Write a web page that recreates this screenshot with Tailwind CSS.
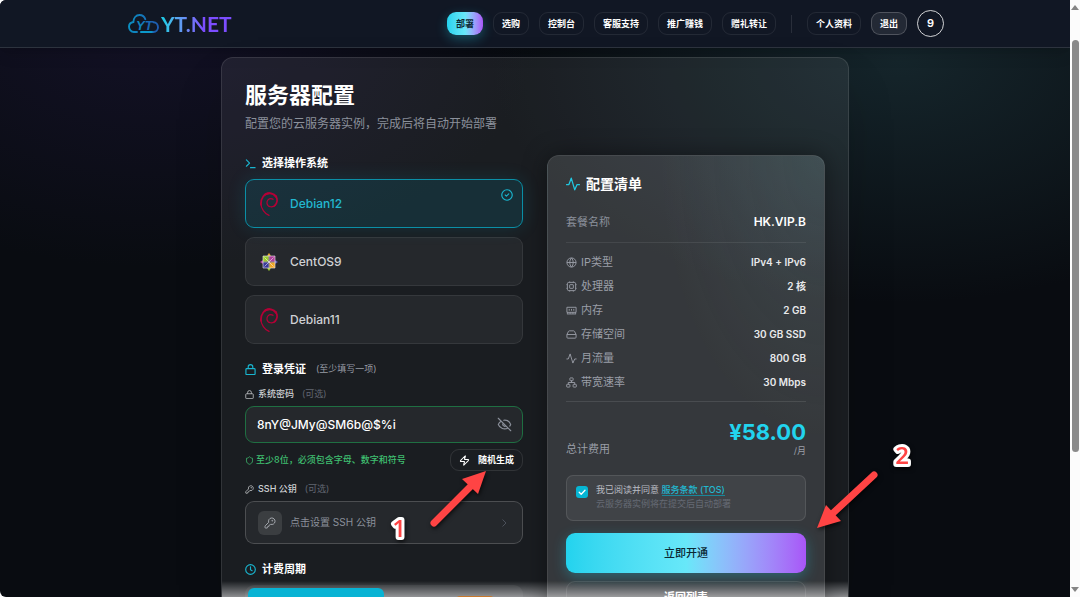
<!DOCTYPE html>
<html lang="zh-CN">
<head>
  <meta charset="UTF-8">
  <meta name="viewport" content="width=device-width, initial-scale=1.0">
  <title>服务器配置 - YT.NET</title>
  <script src="https://cdn.jsdelivr.net/npm/@tailwindcss/browser@4"></script>
</head>
<body class="bg-[#fcfcfc] font-['Inter','Noto_Sans_CJK_SC',sans-serif] text-white">
  <!-- Icons used more than once -->
  <svg class="hidden">
    <symbol id="debian" viewBox="0 0 18 24">
      <g fill="none" stroke="#b40036" stroke-linecap="round">
        <path stroke-width="1.200" d="M9 23.4C4.600 21.500.900 16.500.900 11.200"/>
        <path stroke-width="1.700" d="M1 13C.500 6 4.500 1.300 9.500 1.200"/>
        <path stroke-width="2.200" d="M5.500 2.300C9 .700 13.500 1 16 4.500"/>
        <path stroke-width="1.700" d="M15.500 3.800C18 7 17.500 11.500 14.500 13.800"/>
        <path stroke-width="1.200" d="M15.500 13C12.500 16.200 7.500 15 7 11.300 6.700 8.500 8.700 6.700 10.800 6.700c1 0 1.700.200 2.200.600"/>
      </g>
    </symbol>
    <symbol id="lock" viewBox="0 0 24 24">
      <rect x="2" y="10" width="20" height="13" rx="2"/><path d="M7 10V6.500a5 5 0 0 1 10 0V10"/>
    </symbol>
    <symbol id="key" viewBox="0 0 24 24">
      <path d="M2.600 17.400A2 2 0 0 0 2 18.800V21a1 1 0 0 0 1 1h3a1 1 0 0 0 1-1v-1a1 1 0 0 1 1-1h1a1 1 0 0 0 1-1v-1a1 1 0 0 1 1-1h.200a2 2 0 0 0 1.400-.600l.800-.800a6.500 6.500 0 1 0-4-4z"/><circle cx="16.500" cy="7.500" r=".8"/>
    </symbol>
    <symbol id="pulse" viewBox="0 0 24 24">
      <path d="M1 13h4L9 2l6 20 4-9h4"/>
    </symbol>
  </svg>

  <div class="flex h-screen overflow-hidden">
    <div class="flex min-w-0 flex-1 flex-col overflow-hidden rounded-l-md bg-[#090c11] bg-[radial-gradient(ellipse_at_84%_10%,#15252b_0%,transparent_32%),radial-gradient(ellipse_at_14%_4%,#131126_0%,transparent_30%)]">

      <!-- Header -->
      <header class="h-12 shrink-0 border-b border-white/12 bg-[#111724] shadow-lg">
        <div class="mx-auto flex h-full max-w-[818px] items-center justify-between pl-0.5">
          <a href="#" class="flex items-center gap-0.5">
            <svg class="h-5 w-[31px]" viewBox="0 0 31 20" fill="none" stroke-width="1.900" stroke-linecap="round">
              <defs>
                <linearGradient id="cloud" x1="0" y1="0" x2="1" y2="0">
                  <stop stop-color="#0b8fc2"/><stop offset="1" stop-color="#1e5bb0"/>
                </linearGradient>
              </defs>
              <path stroke="url(#cloud)" d="M9 18H6C3 18 1 15.500 1 12.800 1 10 2.800 8.400 5.400 8 5.500 4 8 1 11.500 1c3 0 5 1.700 5.800 4.200M13 18h12.500c2.500 0 4.500-2 4.500-4.700 0-3-2-5-4.500-5.100"/>
              <text x="8" y="15.500" font-family="Liberation Sans, sans-serif" font-size="13" font-weight="700" font-style="italic" fill="url(#cloud)">YT</text>
              <path stroke="#0aa5d0" stroke-width="1.500" d="M13 18h11"/>
            </svg>
            <span class="bg-linear-to-r from-[#22c7e6] from-5% to-[#7c4dff] to-60% bg-clip-text font-['Lato',sans-serif] text-[21px] font-bold text-transparent">YT.NET</span>
          </a>
          <nav class="flex items-center gap-2.5 text-[9px] font-semibold whitespace-nowrap">
            <a href="#" class="flex h-[23px] items-center rounded-[9px] border border-transparent bg-linear-to-r from-[#22d3ee] via-[#67e8f9] to-[#a855f7] bg-origin-border px-2 text-[#0b2733] shadow-[0_4px_12px_#22d3ee50]">部署</a>
            <a href="#" class="flex h-[23px] items-center rounded-[9px] border border-white/8 px-2">选购</a>
            <a href="#" class="flex h-[23px] items-center rounded-[9px] border border-white/8 px-2">控制台</a>
            <a href="#" class="flex h-[23px] items-center rounded-[9px] border border-white/8 px-2">客服支持</a>
            <a href="#" class="flex h-[23px] items-center rounded-[9px] border border-white/8 px-2">推广赚钱</a>
            <a href="#" class="flex h-[23px] items-center rounded-[9px] border border-white/8 px-2">赠礼转让</a>
            <span class="mx-[5px] h-[18px] w-px bg-white/10"></span>
            <a href="#" class="flex h-[23px] items-center rounded-[9px] border border-white/8 px-2">个人资料</a>
            <button type="button" class="flex h-[23px] items-center rounded-[9px] border border-white/20 bg-white/8 px-2">退出</button>
            <button type="button" class="size-[27px] rounded-full border border-white/80 text-[11px]">9</button>
          </nav>
        </div>
      </header>

      <main class="min-h-0 flex-1 pt-[9px]">
        <div class="relative mx-auto h-full max-w-[628px] overflow-hidden rounded-t-xl border border-b-0 border-white/10 bg-white/7 px-[23px] pt-[23px] shadow-2xl">
          <!-- Light edge at the bottom of the viewport -->
          <div class="absolute inset-x-0 bottom-0 h-4 bg-linear-to-b from-transparent to-white/50"></div>

          <div class="relative">
            <h1 class="text-[22px] leading-7 font-bold">服务器配置</h1>
            <p class="mt-[5px] text-xs leading-5 text-[#8b909b]">配置您的云服务器实例，完成后将自动开始部署</p>
          </div>

          <form class="relative mt-[21px] grid grid-cols-2 items-start gap-6">
            <!-- Left column -->
            <div>
              <fieldset>
                <legend class="flex h-4 items-center gap-1.5 text-[11px] font-semibold">
                  <svg class="size-[11px] text-[#19b5cf]" viewBox="0 0 24 24" fill="none" stroke="currentColor" stroke-width="2.500" stroke-linecap="round" stroke-linejoin="round"><path d="m3 18 7-7-7-7M12 21h10"/></svg>
                  选择操作系统
                </legend>
                <div class="mt-2 space-y-[9px] text-xs font-medium">
                  <label class="flex h-[49px] items-center rounded-[9px] border border-[#0b8fa6] bg-[#06b6d4]/12 pr-2 pl-3.5 text-[#22b8d0] shadow-[0_0_18px_#06b6d426]">
                    <input type="radio" name="os" class="sr-only" checked>
                    <svg class="h-6 w-[18px]"><use href="#debian"/></svg>
                    <span class="ml-3 flex-1">Debian12</span>
                    <svg class="mt-2 size-3.5 self-start text-[#19b5cf]" viewBox="0 0 24 24" fill="none" stroke="currentColor" stroke-width="2" stroke-linecap="round" stroke-linejoin="round"><circle cx="12" cy="12" r="9"/><path d="m9 12 2 2 4-4"/></svg>
                  </label>
                  <label class="flex h-[49px] items-center rounded-[9px] border border-white/8 bg-white/5 px-3.5 text-[#cfd1d4]">
                    <input type="radio" name="os" class="sr-only">
                    <svg class="size-[18px]" viewBox="0 0 18 18">
                      <rect x="3" y="3" width="5.600" height="5.600" fill="#9ccd2a"/><rect x="9.400" y="3" width="5.600" height="5.600" fill="#b0409b"/>
                      <rect x="3" y="9.400" width="5.600" height="5.600" fill="#3a3a9c"/><rect x="9.400" y="9.400" width="5.600" height="5.600" fill="#efa724"/>
                      <path fill="#efa724" d="m9 0 2 2.800H7z"/><path fill="#9ccd2a" d="m9 18 2-2.800H7z"/>
                      <path fill="#b0409b" d="m0 9 2.800-2v4z"/><path fill="#5a5ab8" d="m18 9-2.800-2v4z"/>
                      <path stroke="#f1ecf5" stroke-width=".6" fill="none" d="M9 2v14M2 9h14M4.500 4.500l9 9M13.500 4.500l-9 9M3 3h12v12H3z"/>
                    </svg>
                    <span class="ml-3">CentOS9</span>
                  </label>
                  <label class="flex h-[49px] items-center rounded-[9px] border border-white/8 bg-white/5 px-3.5 text-[#cfd1d4]">
                    <input type="radio" name="os" class="sr-only">
                    <svg class="h-6 w-[18px]"><use href="#debian"/></svg>
                    <span class="ml-3">Debian11</span>
                  </label>
                </div>
              </fieldset>

              <h2 class="mt-[17px] flex h-4 items-center gap-1.5 text-[11px] font-semibold">
                <svg class="size-[11px] text-[#19b5cf]" fill="none" stroke="currentColor" stroke-width="2.500"><use href="#lock"/></svg>
                登录凭证
                <span class="ml-1 text-[9px] font-normal text-[#989ca5]">(至少填写一项)</span>
              </h2>
              <label for="password" class="mt-[9px] flex h-4 items-center gap-1 text-[9px] font-medium text-[#cfd1d4]">
                <svg class="size-[9px]" fill="none" stroke="currentColor" stroke-width="2"><use href="#lock"/></svg>
                系统密码
                <span class="ml-1 font-normal text-[#626772]">(可选)</span>
              </label>
              <div class="mt-1 flex h-[37px] items-center rounded-[9px] border border-[#1f6f42] bg-white/5 pr-2.5 pl-[11px]">
                <input id="password" type="text" value="8nY@JMy@SM6b@$%i" class="min-w-0 flex-1 bg-transparent text-xs font-medium text-white outline-none">
                <button type="button" aria-label="隐藏密码" class="text-[#8b909b]">
                  <svg class="size-[15px]" viewBox="0 0 24 24" fill="none" stroke="currentColor" stroke-width="1.800" stroke-linecap="round" stroke-linejoin="round"><path d="M10.700 5.100A10.700 10.700 0 0 1 21.900 12a10.700 10.700 0 0 1-1.500 2.500M14.100 14.200a3 3 0 0 1-4.200-4.200M17.500 17.500A10.700 10.700 0 0 1 2.100 12a10.700 10.700 0 0 1 4.400-5.100M2 2l20 20"/></svg>
                </button>
              </div>
              <div class="mt-1.5 flex h-[22px] items-center justify-between">
                <p class="flex items-center gap-0.5 text-[9px] font-medium text-[#3fbf70]">
                  <svg class="size-[9px]" viewBox="0 0 24 24" fill="none" stroke="currentColor" stroke-width="2"><path d="M20 13c0 5-3.500 7.500-8 9-4.500-1.500-8-4-8-9V6c3 0 5.500-1.500 8-4 2.500 2.500 5 4 8 4z"/></svg>
                  至少8位，必须包含字母、数字和符号
                </p>
                <button type="button" class="flex h-[22px] items-center gap-2 rounded-[9px] border border-white/10 px-2 text-[9px] font-semibold">
                  <svg class="size-[11px]" viewBox="0 0 24 24" fill="none" stroke="currentColor" stroke-width="2.200" stroke-linejoin="round"><path d="M4 14a1 1 0 0 1-.800-1.600l9.900-10.200a.5.500 0 0 1 .900.500l-2 6A1 1 0 0 0 13 10h7a1 1 0 0 1 .800 1.600l-9.900 10.200a.5.500 0 0 1-.900-.500l2-6A1 1 0 0 0 11 14z"/></svg>
                  随机生成
                </button>
              </div>

              <h3 class="mt-2.5 flex h-4 items-center gap-1 text-[9px] font-medium text-[#cfd1d4]">
                <svg class="size-[9px]" fill="none" stroke="currentColor" stroke-width="2"><use href="#key"/></svg>
                SSH 公钥
                <span class="ml-1 font-normal text-[#626772]">(可选)</span>
              </h3>
              <button type="button" class="mt-1 flex h-[43px] w-full items-center rounded-[9px] border border-white/18 bg-white/5 pr-3 pl-3 text-left text-[10px] text-[#8b909b]">
                <span class="grid size-6 place-items-center rounded-md bg-white/10">
                  <svg class="size-3" fill="none" stroke="#b0b3ba" stroke-width="1.800"><use href="#key"/></svg>
                </span>
                <span class="ml-2 flex-1">点击设置 SSH 公钥</span>
                <svg class="size-3 text-[#4b505a]" viewBox="0 0 24 24" fill="none" stroke="currentColor" stroke-width="2"><path d="m9 19 7-7-7-7"/></svg>
              </button>

              <h2 class="mt-[17px] flex h-4 items-center gap-1.5 text-[11px] font-semibold">
                <svg class="size-[11px] text-[#19b5cf]" viewBox="0 0 24 24" fill="none" stroke="currentColor" stroke-width="2.500" stroke-linecap="round"><circle cx="12" cy="12" r="10.500"/><path d="M12 6v6.500l3.500 2"/></svg>
                计费周期
              </h2>
              <div class="mt-2 grid h-10 grid-cols-2 rounded-[9px] bg-white/6 p-[3px]">
                <button type="button" aria-label="月付" class="rounded-md bg-[#08b3d4]"></button>
                <button type="button" aria-label="年付" class="flex justify-center pt-2 pl-[46px]"><span class="h-3 w-[38px] rounded-sm bg-[#c8782b]"></span></button>
              </div>
            </div>

            <!-- Summary -->
            <section class="rounded-xl border border-white/8 bg-white/12 bg-[radial-gradient(ellipse_at_100%_0%,#5f8f9626_0%,transparent_42%)] p-[18px] shadow-[0_0_24px_#0006]">
              <h2 class="flex h-5 items-center gap-1.5 text-sm font-bold">
                <svg class="size-3.5 text-[#22c7e0]" fill="none" stroke="currentColor" stroke-width="2.200" stroke-linecap="round" stroke-linejoin="round"><use href="#pulse"/></svg>
                配置清单
              </h2>
              <div class="mt-[19px] flex h-[30px] justify-between border-b border-white/8 text-xs leading-[18px]">
                <span class="text-[11px] text-[#8b909b]">套餐名称</span>
                <span class="font-semibold">HK.VIP.B</span>
              </div>
              <dl class="space-y-1.5 border-b border-white/10 pt-[10px] pb-[10px] text-[11px] leading-[18px] text-[#9a9ea7] [&_dd]:text-[10px] [&_dd]:font-semibold [&_dd]:text-[#e8e9eb] [&_div]:flex [&_div]:justify-between [&_dt]:flex [&_dt]:items-center [&_dt]:gap-1 [&_svg]:size-[11px] [&_svg]:fill-none [&_svg]:stroke-current [&_svg]:stroke-2">
                <div>
                  <dt><svg viewBox="0 0 24 24"><circle cx="12" cy="12" r="10"/><path d="M12 2a15 15 0 0 0 0 20 15 15 0 0 0 0-20M2 12h20"/></svg>IP类型</dt>
                  <dd>IPv4 + IPv6</dd>
                </div>
                <div>
                  <dt><svg viewBox="0 0 24 24"><rect x="3" y="3" width="18" height="18" rx="3"/><rect x="8" y="8" width="8" height="8" rx="1"/><path d="M8 1v2M16 1v2M8 21v2M16 21v2M1 8h2M1 16h2M21 8h2M21 16h2"/></svg>处理器</dt>
                  <dd>2 核</dd>
                </div>
                <div>
                  <dt><svg viewBox="0 0 24 24"><path d="M2 5h20v11H2zM2 19.500h20M7 8.500v4M12 8.500v4M17 8.500v4M3 16v3M21 16v3M9 16v3M15 16v3"/></svg>内存</dt>
                  <dd>2 GB</dd>
                </div>
                <div>
                  <dt><svg viewBox="0 0 24 24"><path d="M2 12h20M5.500 5.100 2 12v6a2 2 0 0 0 2 2h16a2 2 0 0 0 2-2v-6l-3.500-6.900A2 2 0 0 0 16.800 4H7.200a2 2 0 0 0-1.700 1.100zM6 16h.1M10 16h.1"/></svg>存储空间</dt>
                  <dd>30 GB SSD</dd>
                </div>
                <div>
                  <dt><svg viewBox="0 0 24 24"><use href="#pulse"/></svg>月流量</dt>
                  <dd>800 GB</dd>
                </div>
                <div>
                  <dt><svg viewBox="0 0 24 24"><rect x="8.500" y="2" width="7" height="6" rx="1"/><rect x="1.500" y="16" width="7" height="6" rx="1"/><rect x="15.500" y="16" width="7" height="6" rx="1"/><path d="M5 16v-4h14v4M12 12V8"/></svg>带宽速率</dt>
                  <dd>30 Mbps</dd>
                </div>
              </dl>
              <div class="mt-[17px] flex items-end justify-between">
                <span class="text-[11px] leading-4 text-[#9a9ea7]">总计费用</span>
                <div class="text-right">
                  <div class="text-[22px] leading-[26px] font-bold text-[#22d3ee]">¥58.00</div>
                  <div class="text-[9px] leading-3 text-[#9a9ea7]">/月</div>
                </div>
              </div>
              <div class="mt-[18px] flex h-[46px] gap-2 rounded-[7px] border border-white/10 bg-white/6 px-[9px] pt-[7px] text-[9px] leading-[14px]">
                <input id="tos" type="checkbox" checked class="peer mt-[3px] size-3 shrink-0 appearance-none rounded-[3px] bg-[#06b6d4]">
                <svg class="pointer-events-none mt-[3px] -ml-5 size-3 shrink-0" viewBox="0 0 12 12" fill="none" stroke="white" stroke-width="1.300" stroke-linecap="round" stroke-linejoin="round"><path d="m3.200 6.200 2 2 3.800-4"/></svg>
                <div>
                  <label for="tos" class="text-[#b9bcc2]">我已阅读并同意</label>
                  <a href="#" class="border-b border-[#19879a] font-medium text-[#22b8d0]">服务条款 (TOS)</a>
                  <p class="text-[#656a74]">云服务器实例将在提交后自动部署</p>
                </div>
              </div>
              <button type="submit" class="mt-3 h-10 w-full rounded-[9px] bg-linear-to-r from-[#22d3ee] via-[#67e8f9] to-[#a855f7] text-[11px] font-medium text-[#0b2733] shadow-[0_4px_14px_#22d3ee50]">立即开通</button>
              <button type="button" class="mt-2 h-8 w-full rounded-[9px] border border-white/10 text-[11px] font-semibold">返回列表</button>
            </section>
          </form>
        </div>
      </main>
    </div>

    <!-- Scrollbar -->
    <div class="flex w-[10px] shrink-0 flex-col items-center bg-[#fcfcfc] py-1">
      <svg class="h-1.5 w-2" viewBox="0 0 8 6" fill="#858585"><path d="M4 1 8 6H0z"/></svg>
      <div class="mt-[30px] h-[70%] w-[7px] rounded-full bg-[#8a8a8a]"></div>
      <svg class="mt-auto h-1.5 w-2" viewBox="0 0 8 6" fill="#858585"><path d="M4 5 8 0H0z"/></svg>
    </div>
  </div>

  <!-- Step arrows over the page -->
  <svg class="pointer-events-none absolute top-0 left-0 h-[597px] w-[1080px] drop-shadow-[1px_2px_2px_#000a]" viewBox="0 0 1080 597">
    <g fill="#ff4444" stroke="#ff4444">
      <path stroke-width="7" stroke-linecap="round" d="m434 523 38-38"/>
      <path stroke="none" d="m486 471-24 8 16 15z"/>
      <path stroke-width="7" stroke-linecap="round" d="m874 475-42 39"/>
      <path stroke="none" d="m817 528 9-23 15 16z"/>
    </g>
    <g font-family="Open Sans, sans-serif" font-size="24" font-weight="600" text-anchor="middle" fill="#ff4444" stroke="#fff" stroke-width="6" stroke-linejoin="round" paint-order="stroke">
      <text x="399" y="537">1</text>
      <text x="902" y="464">2</text>
    </g>
  </svg>
</body>
</html>
